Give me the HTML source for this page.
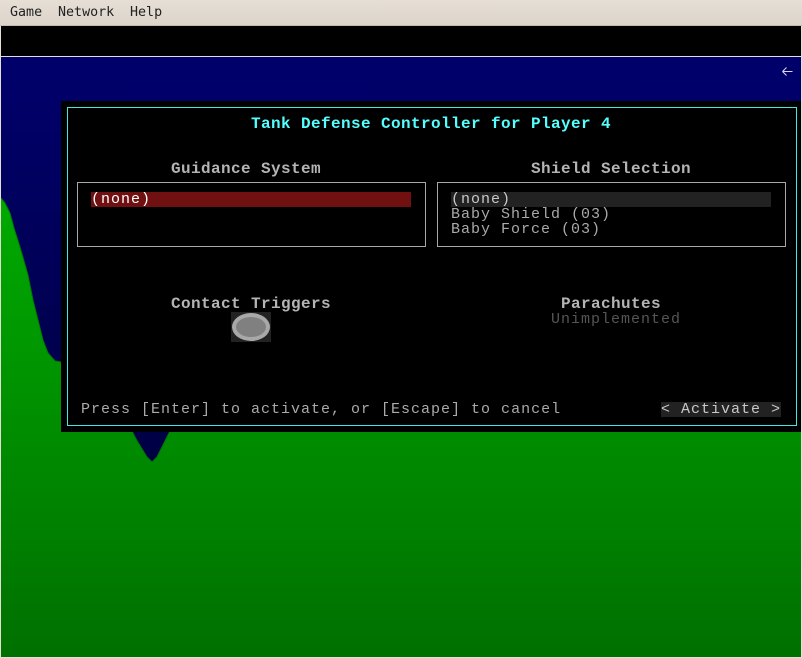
<!DOCTYPE html>
<html><head><meta charset="utf-8"><style>
html,body{margin:0;padding:0;background:#e6dfd6}
body{width:802px;height:658px;position:relative;overflow:hidden}
div{position:absolute;box-sizing:border-box}
.menu{left:0;top:0;width:802px;height:26px;background:linear-gradient(#e6dfd6,#ddd4ca);border-bottom:1px solid #c4baae}
.m{top:4px;font:13.33px/17px "DejaVu Sans Mono",monospace;color:#222;white-space:pre}
.t{font:15px/15px "Liberation Mono",monospace;letter-spacing:1px;white-space:pre;height:15px;color:#aaa}
.b{font:bold 16px/15px "Liberation Mono",monospace;letter-spacing:.4px;color:#b4b4b4}
.box{border:1px solid #a8a8a8}
</style></head><body>
<div class="menu"></div>
<div class="m" style="left:10px">Game</div>
<div class="m" style="left:58px">Network</div>
<div class="m" style="left:130px">Help</div>
<div style="left:1px;top:26px;width:800px;height:30px;background:#000"></div>
<div style="left:1px;top:56px;width:800px;height:1px;background:#e6dfd6"></div>
<svg style="position:absolute;left:1px;top:57px" width="800" height="600" viewBox="1 57 800 600">
<defs>
<linearGradient id="g" gradientUnits="userSpaceOnUse" x1="0" y1="199" x2="0" y2="657"><stop offset="0" stop-color="#00aa00"/><stop offset="1" stop-color="#007000"/></linearGradient>
<linearGradient id="s" gradientUnits="userSpaceOnUse" x1="0" y1="57" x2="0" y2="461"><stop offset="0" stop-color="#00006c"/><stop offset="1" stop-color="#000044"/></linearGradient>
</defs>
<rect x="1" y="57" width="800" height="600" fill="url(#s)"/>
<path d="M1 198L5 203L10 213L14 228L20 247L28 275L33 300L38 320L43 340L48 353L55 361L61 362L70 362L132 431L136 439L142 449L147 457L152 462L157 457L163 445L170 431L801 431L801 657L1 657Z" fill="url(#g)"/>
<path d="M1 198L5 203L10 213L14 228L20 247L28 275L33 300L38 320L43 340L48 353L55 361L61 362M132 431L136 439L142 449L147 457L152 462L157 457L163 445L170 431" fill="none" stroke="#007800" stroke-width="1"/>
<path d="M782.5 71.5H792.5M782.5 71.5L786.5 67.5M782.5 71.5L786.5 75.5" fill="none" stroke="#d8d8f0" stroke-width="1"/>
</svg>
<div style="left:61px;top:101px;width:740px;height:331px;background:#000"></div>
<div style="left:67px;top:107px;width:730px;height:319px;border:1px solid #40e8e8"></div>
<div class="t b" style="left:251px;top:117px;color:#55ffff">Tank Defense Controller for Player 4</div>
<div class="t b" style="left:171px;top:162px">Guidance System</div>
<div class="t b" style="left:531px;top:162px">Shield Selection</div>
<div class="box" style="left:77px;top:182px;width:349px;height:65px"></div>
<div class="box" style="left:437px;top:182px;width:349px;height:65px"></div>
<div style="left:91px;top:192px;width:320px;height:15px;background:#701010"></div>
<div class="t" style="left:91px;top:192px;color:#fff">(none)</div>
<div style="left:451px;top:192px;width:320px;height:15px;background:#222"></div>
<div class="t" style="left:451px;top:192px;color:#c8c8c8">(none)</div>
<div class="t" style="left:451px;top:207px">Baby Shield (03)</div>
<div class="t" style="left:451px;top:222px">Baby Force (03)</div>
<div class="t b" style="left:171px;top:297px">Contact Triggers</div>
<div style="left:231px;top:312px;width:40px;height:30px;background:#222"></div>
<div style="left:232px;top:313px;width:38px;height:28px;border-radius:50%;background:#808080;border:4px solid #a8a8a8"></div>
<div class="t b" style="left:561px;top:297px">Parachutes</div>
<div class="t" style="left:551px;top:312px;color:#555">Unimplemented</div>
<div class="t" style="left:81px;top:402px">Press [Enter] to activate, or [Escape] to cancel</div>
<div style="left:661px;top:402px;width:120px;height:15px;background:#222"></div>
<div class="t" style="left:661px;top:402px;color:#c8c8c8">&lt; Activate &gt;</div>
</body></html>
